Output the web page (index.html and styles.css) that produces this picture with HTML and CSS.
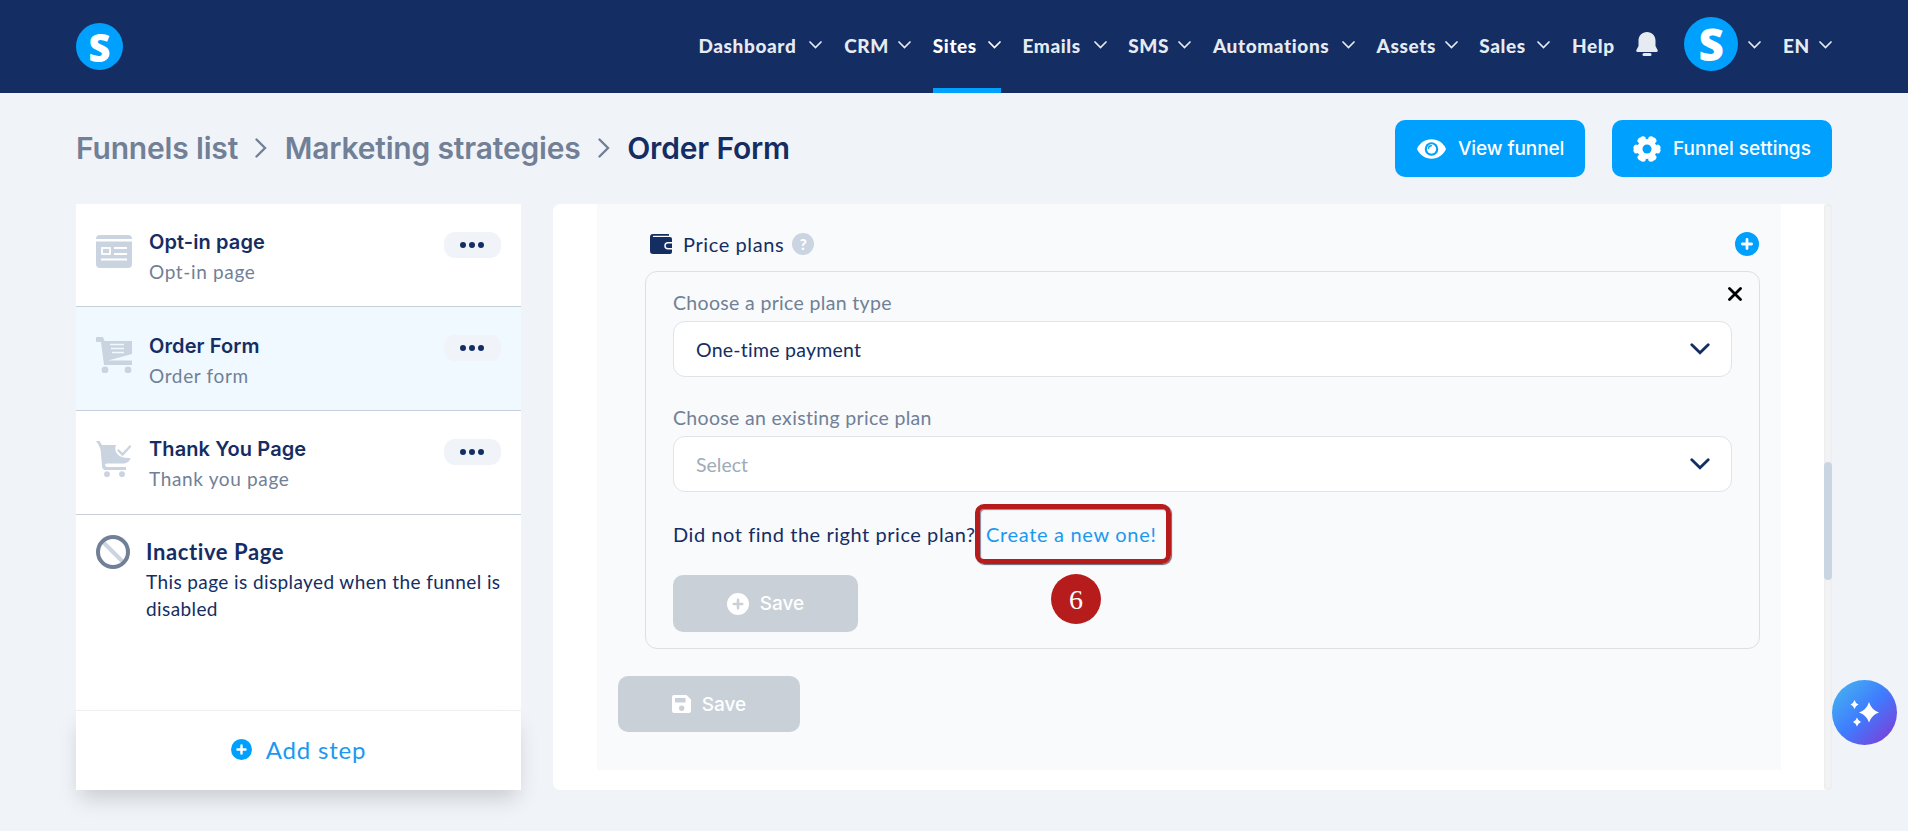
FILE: index.html
```
<!DOCTYPE html>
<html lang="en">
<head>
    <meta charset="UTF-8">
    <title>Order Form</title>
    <link rel="stylesheet" href="styles.css">
</head>
<body>
    <svg class="defs">
        <symbol id="chev" viewBox="0 0 13 8"><path d="M1 1l5.500 5.500L12 1" fill="none" stroke="currentColor" stroke-width="1.700" stroke-linecap="round"/></symbol>
        <symbol id="chev-bold" viewBox="0 0 20 12"><path d="M1.800 1.800l8.200 8 8.200-8" fill="none" stroke="currentColor" stroke-width="2.800" stroke-linecap="round"/></symbol>
        <symbol id="sep" viewBox="0 0 12 20"><path d="M1.500 1.500L10 10l-8.500 8.500" fill="none" stroke="currentColor" stroke-width="2.400" stroke-linecap="round"/></symbol>
        <symbol id="plus" viewBox="0 0 24 24"><path fill-rule="evenodd" fill="currentColor" d="M12 0a12 12 0 1 0 0 24 12 12 0 0 0 0-24zM10.600 7.400a1.400 1.400 0 0 1 2.800 0v3.200h3.200a1.400 1.400 0 0 1 0 2.800h-3.200v3.200a1.400 1.400 0 0 1-2.800 0v-3.200H7.400a1.400 1.400 0 0 1 0-2.800h3.200z"/></symbol>
    </svg>

    <header class="header">
        <div class="logo">S</div>
        <nav class="nav">
            <a class="nav-item">Dashboard <svg><use href="#chev"/></svg></a>
            <a class="nav-item">CRM <svg><use href="#chev"/></svg></a>
            <a class="nav-item active">Sites <svg><use href="#chev"/></svg></a>
            <a class="nav-item">Emails <svg><use href="#chev"/></svg></a>
            <a class="nav-item">SMS <svg><use href="#chev"/></svg></a>
            <a class="nav-item">Automations <svg><use href="#chev"/></svg></a>
            <a class="nav-item">Assets <svg><use href="#chev"/></svg></a>
            <a class="nav-item">Sales <svg><use href="#chev"/></svg></a>
            <a class="nav-item">Help</a>
            <a class="nav-item"><svg class="bell" viewBox="0 0 22 24"><path fill="currentColor" d="M11 0C6 0 2.500 3.800 2.500 8.500V14L.3 18.200C-.1 19.200.5 20 1.500 20h19c1 0 1.600-.8 1.200-1.800L19.500 14V8.500C19.500 3.800 16 0 11 0z"/><rect x="6.500" y="21" width="9" height="3" rx="1.500" fill="currentColor"/></svg></a>
            <a class="nav-item"><span class="logo avatar">S</span> <svg><use href="#chev"/></svg></a>
            <a class="nav-item">EN <svg><use href="#chev"/></svg></a>
        </nav>
    </header>

    <div class="topbar">
        <div class="crumbs">
            <span>Funnels list</span>
            <svg><use href="#sep"/></svg>
            <span>Marketing strategies</span>
            <svg><use href="#sep"/></svg>
            <span class="current">Order Form</span>
        </div>
        <div class="actions">
            <button class="btn view">
                <svg viewBox="0 0 30 20" width="29" height="20"><path fill="#fff" d="M15 0C8 0 3 4 .3 9.200a1.800 1.800 0 0 0 0 1.600C3 16 8 20 15 20s12-4 14.700-9.200a1.800 1.800 0 0 0 0-1.600C27 4 22 0 15 0z"/><circle cx="15" cy="10" r="7" fill="#00a0ff"/><circle cx="15" cy="10" r="4.800" fill="#fff"/><path d="M11.800 9.200a3.300 3.300 0 0 1 3-2.600" fill="none" stroke="#00a0ff" stroke-width="1.500" stroke-linecap="round"/></svg>
                View funnel
            </button>
            <button class="btn settings">
                <svg viewBox="0 0 28 26" width="28" height="26"><g fill="#fff"><circle cx="14" cy="13" r="10"/><g id="teeth"><circle cx="10" cy="3" r="2.800"/><circle cx="18" cy="3" r="2.800"/><circle cx="10" cy="23" r="2.800"/><circle cx="18" cy="23" r="2.800"/></g><use href="#teeth" transform="rotate(60 14 13)"/><use href="#teeth" transform="rotate(120 14 13)"/></g><circle cx="14" cy="13" r="4.500" fill="#00a0ff"/></svg>
                Funnel settings
            </button>
        </div>
    </div>

    <div class="content">
        <aside class="sidebar">
            <div class="step">
                <svg class="step-icon" viewBox="0 0 36 36"><path fill="#cad3e0" d="M4 1h28a4 4 0 0 1 4 4H0a4 4 0 0 1 4-4zM0 7.500h36V30a4 4 0 0 1-4 4H4a4 4 0 0 1-4-4z"/><g fill="none" stroke="#fff" stroke-width="1.800"><rect x="6" y="14" width="8" height="6"/><path d="M18 14h13M18 20h13M5 25.500h26"/></g></svg>
                <div class="step-text">
                    <h3>Opt-in page</h3>
                    <p>Opt-in page</p>
                </div>
                <div class="more"><i></i><i></i><i></i></div>
            </div>
            <div class="step selected">
                <svg class="step-icon" viewBox="0 0 36 36"><path fill="#cad3e0" d="M1.500 0H7l1.500 4H36v13L12 23.500h24V28H8L5 5H1.500a2.500 2.500 0 0 1 0-5z"/><circle cx="9" cy="33" r="3.400" fill="#cad3e0"/><circle cx="32" cy="33" r="3.400" fill="#cad3e0"/><path d="M14 7.500h14M15 11.500h13M16 15.500h12" stroke="#f0f9ff" stroke-width="1.300"/></svg>
                <div class="step-text">
                    <h3>Order Form</h3>
                    <p>Order form</p>
                </div>
                <div class="more"><i></i><i></i><i></i></div>
            </div>
            <div class="step">
                <svg class="step-icon" viewBox="0 0 36 36"><path fill="#cad3e0" d="M0 0h3.500L6 4h14c-3 7 3 14 14.500 13-1 4-4 5.500-8 5.500H11c-3 0-2 3.500 0 3.500h19v3H10c-3 0-4-2-4-5L4.500 8 2 3z"/><path d="M22.500 9.500l4 4 7.500-8" fill="none" stroke="#cad3e0" stroke-width="2.400" stroke-linecap="round"/><circle cx="11" cy="33.200" r="2.900" fill="#cad3e0"/><circle cx="26" cy="33.200" r="2.900" fill="#cad3e0"/></svg>
                <div class="step-text">
                    <h3>Thank You Page</h3>
                    <p>Thank you page</p>
                </div>
                <div class="more"><i></i><i></i><i></i></div>
            </div>
            <div class="inactive">
                <svg viewBox="0 0 34 34" width="34" height="34"><path d="M7 7l20 20" stroke="#cbd5e1" stroke-width="4"/><circle cx="17" cy="17" r="15" fill="none" stroke="#718096" stroke-width="4"/></svg>
                <div>
                    <h3>Inactive Page</h3>
                    <p>This page is displayed when the funnel is disabled</p>
                </div>
            </div>
            <div class="add-step"><svg><use href="#plus"/></svg> <span>Add step</span></div>
        </aside>

        <main class="panel">
            <div class="panel-body">
                <div class="plans-head">
                    <svg viewBox="0 0 22 20" width="22" height="20"><path fill="#142d63" d="M3 0h16v1.800H3.500a.6.600 0 0 0 0 1.300H20a2 2 0 0 1 2 2V8h-4a3.700 3.700 0 0 0 0 7.500h4V18a2 2 0 0 1-2 2H3a3 3 0 0 1-3-3V3a3 3 0 0 1 3-3z"/><path fill="#142d63" d="M18 9.500h4V14h-4a2.200 2.200 0 0 1 0-4.500z"/></svg>
                    <span class="plans-title">Price plans</span>
                    <span class="help">?</span>
                    <svg class="plans-add"><use href="#plus"/></svg>
                </div>
                <div class="card">
                    <svg class="close" viewBox="0 0 14 14"><path d="M1.500 1.500l11 11M12.500 1.500l-11 11" stroke="#000" stroke-width="2.800" stroke-linecap="round"/></svg>
                    <label>Choose a price plan type</label>
                    <div class="select"><span>One-time payment</span> <svg><use href="#chev-bold"/></svg></div>
                    <label>Choose an existing price plan</label>
                    <div class="select empty"><span>Select</span> <svg><use href="#chev-bold"/></svg></div>
                    <div class="hint">
                        <span class="question">Did not find the right price plan?</span>
                        <a class="create">Create a new one!<span class="mark"></span><span class="mark-number">6</span></a>
                    </div>
                    <button class="btn disabled"><svg width="22" height="22"><use href="#plus"/></svg> Save</button>
                </div>
                <button class="btn disabled save-form">
                    <svg viewBox="0 0 19 18" width="19" height="18"><path fill="#fff" fill-rule="evenodd" d="M2 0h12.500L19 4.500V16a2 2 0 0 1-2 2H2a2 2 0 0 1-2-2V2a2 2 0 0 1 2-2zM3 3v4.500h10.500V3zM9.700 10.500a2.700 2.700 0 1 0 0 5.400 2.700 2.700 0 0 0 0-5.400z"/></svg>
                    Save
                </button>
            </div>
            <div class="scrollbar"><div class="thumb"></div></div>
        </main>
    </div>

    <div class="assistant">
        <svg viewBox="0 0 30 28" width="30" height="28"><path fill="#fff" d="M19 3q2.500 8 10 10.500-7.500 2.500-10 10-2.500-7.500-10-10Q16.500 11 19 3zM4.500 1q1 3.500 4 4.500-3 1-4 4.500-1-3.500-4-4.500 3-1 4-4.500zM7 18.500q1 3.500 4 4.500-3 1-4 4.500-1-3.500-4-4.500 3-1 4-4.500z"/></svg>
    </div>
</body>
</html>
```

FILE: styles.css
```
* {
    box-sizing: border-box;
}
body {
    margin: 0;
    height: 831px;
    overflow: hidden;
    font-family: Lato, sans-serif;
    background-color: #f0f4f9;
    color: #142d63;
}
h3, p {
    margin: 0;
}
svg {
    flex: none;
}
.defs {
    display: none;
}

/* header */
.header {
    display: flex;
    justify-content: space-between;
    align-items: center;
    height: 93px;
    padding: 0 76px;
    background-color: #142d63;
}
.logo {
    display: flex;
    align-items: center;
    justify-content: center;
    width: 47px;
    height: 47px;
    border-radius: 50%;
    background-color: #00a0ff;
    color: #fff;
    font: 800 38px/1 "Open Sans", sans-serif;
    letter-spacing: 0;
}
.avatar {
    width: 54px;
    height: 54px;
    font-size: 44px;
    margin-top: -3px;
}
.nav {
    display: grid;
    grid-template-columns: 124px 67px 68px 84px 63px 142px 81px 71px 42px 27px 77px 49px;
    column-gap: 21.700px;
    height: 93px;
}
.nav-item {
    display: flex;
    align-items: center;
    justify-content: space-between;
    color: #e6ebf2;
    font-size: 19px;
    font-weight: 900;
    letter-spacing: 0.6px;
    white-space: nowrap;
    border-top: 3px solid transparent;
    border-bottom: 5px solid transparent;
}
.nav-item svg {
    width: 13px;
    height: 8px;
    margin-top: -2px;
}
.nav-item .bell {
    width: 22px;
    height: 24px;
    margin-top: -3px;
}
.nav-item.active {
    color: #fff;
    border-bottom-color: #00a0ff;
}

/* breadcrumb and buttons */
.topbar {
    display: flex;
    justify-content: space-between;
    align-items: center;
    height: 111px;
    padding: 0 76px;
}
.crumbs {
    display: flex;
    align-items: center;
    gap: 17.300px;
    margin-top: -2px;
    font: 600 30px Inter, sans-serif;
    letter-spacing: -0.170px;
    color: #718096;
}
.crumbs svg {
    width: 12px;
    height: 20px;
}
.crumbs .current {
    color: #142d63;
}
.actions {
    display: flex;
    gap: 27px;
}
.btn {
    display: flex;
    align-items: center;
    gap: 12px;
    height: 57px;
    padding: 0 21px;
    border: none;
    border-radius: 10px;
    background-color: #00a0ff;
    color: #fff;
    font: 500 19px Inter, sans-serif;
    white-space: nowrap;
}
.view {
    width: 190px;
    padding-left: 22px;
    letter-spacing: -0.1px;
}
.settings {
    width: 220px;
}

/* steps */
.content {
    display: flex;
    gap: 32px;
    height: 586px;
    padding: 0 76px;
}
.sidebar {
    display: flex;
    flex-direction: column;
    width: 445px;
    background-color: #fff;
}
.step {
    display: flex;
    height: 104px;
    padding: 28px 20px 0;
    border-bottom: 1px solid #c6d0db;
}
.step:first-child {
    height: 103px;
}
.step.selected {
    background-color: #f0f9ff;
}
.step-icon {
    width: 36px;
    height: 36px;
    margin-top: 2px;
}
.step-text {
    flex: 1;
    margin-left: 17px;
}
.step-text h3 {
    font: 600 20px/20px Inter, sans-serif;
    letter-spacing: 0.1px;
}
.selected h3 {
    padding-top: 1px;
}
.step-text p {
    margin-top: 9px;
    font-size: 19px;
    line-height: 22px;
    letter-spacing: 0.650px;
    color: #718096;
}
.more {
    display: flex;
    align-items: center;
    justify-content: center;
    gap: 3px;
    width: 57px;
    height: 26px;
    padding-right: 1px;
    border-radius: 11px;
    background-color: #f0f4f9;
}
.more i {
    width: 6px;
    height: 6px;
    border-radius: 50%;
    background-color: #142d63;
}
.inactive {
    display: flex;
    flex: 1;
    gap: 16px;
    padding: 20px 20px 0;
}
.inactive h3 {
    margin-top: 4px;
    font-size: 22px;
    line-height: 25px;
    letter-spacing: 0.600px;
}
.inactive p {
    margin-top: 4px;
    font-size: 19px;
    line-height: 27px;
    letter-spacing: 0.400px;
}
.add-step {
    display: flex;
    align-items: center;
    justify-content: center;
    gap: 14px;
    height: 80px;
    border-top: 1px solid #edeff2;
    background-color: #fff;
    color: #1b98f0;
    font-size: 24px;
    letter-spacing: 0.8px;
    box-shadow: 0 12px 20px -4px rgba(0, 0, 0, 0.17);
}
.add-step svg {
    width: 21px;
    height: 21px;
    margin-top: -2px;
    color: #00a0ff;
}
.add-step span {
    margin-top: -2px;
}

/* price plans */
.panel {
    display: flex;
    justify-content: space-between;
    flex: 1;
    padding-left: 44px;
    border-radius: 7px;
    background-color: #fff;
}
.panel-body {
    width: 1184px;
    height: 566px;
    padding: 27px 21px 0 48px;
    background-color: #f8fafc;
}
.plans-head {
    display: flex;
    align-items: center;
    height: 26px;
    margin-bottom: 14px;
    padding: 0 1px 0 5px;
}
.plans-title {
    margin: 0 8px 0 11px;
    font-size: 20px;
    letter-spacing: 0.600px;
}
.help {
    width: 22px;
    height: 22px;
    border-radius: 50%;
    background-color: #cbd5e1;
    color: #fff;
    font: 900 15px/22px Lato, sans-serif;
    text-align: center;
}
.plans-add {
    width: 24px;
    height: 24px;
    margin-left: auto;
    color: #00a0ff;
}
.card {
    position: relative;
    height: 378px;
    padding: 17px 27px 0;
    border: 1px solid #dcdfe4;
    border-radius: 12px;
}
.close {
    position: absolute;
    top: 15px;
    right: 17px;
    width: 14px;
    height: 14px;
}
.card label {
    display: block;
    height: 32px;
    font-size: 19.500px;
    line-height: 27px;
    letter-spacing: 0.330px;
    color: #718096;
}
.select {
    display: flex;
    align-items: center;
    justify-content: space-between;
    height: 56px;
    margin-bottom: 27px;
    padding: 0 21px 0 22px;
    border: 1px solid #e0e3e8;
    border-radius: 12px;
    background-color: #fff;
    font-size: 19.500px;
    letter-spacing: 0.250px;
}
.select svg {
    width: 20px;
    height: 12px;
}
.select.empty {
    margin-bottom: 30px;
}
.empty span {
    color: #a0abb8;
    letter-spacing: 0;
}
.hint {
    display: flex;
    height: 24px;
    margin-bottom: 29px;
    font-size: 20px;
    line-height: 24px;
    letter-spacing: 0.550px;
    white-space: nowrap;
}
.question {
    width: 313px;
}
.create {
    position: relative;
    color: #1b98f0;
    letter-spacing: 0.680px;
}
/* outlined link with its step number */
.mark {
    position: absolute;
    top: -18px;
    left: -11px;
    width: 196px;
    height: 60px;
    border: 5px solid #b71c1c;
    border-radius: 9px;
    box-shadow: 1px 1px 1px #667, inset 1px 1px 1px #889;
}
.mark-number {
    position: absolute;
    top: 52px;
    left: 65px;
    width: 50px;
    height: 50px;
    border-radius: 50%;
    background-color: #b71c1c;
    color: #fff;
    font: 28px/51px "Liberation Serif", serif;
    letter-spacing: 0;
    text-align: center;
}
.btn.disabled {
    justify-content: center;
    gap: 11px;
    width: 185px;
    background-color: #c9d0d7;
}
.btn.save-form {
    width: 182px;
    height: 56px;
    margin: 27px 0 0 -27px;
}
.scrollbar {
    width: 8px;
    padding-top: 258px;
    border-radius: 5px;
    background-color: #f3f3f4;
    box-shadow: inset 0 0 3px #e4e5e8;
}
.thumb {
    height: 118px;
    border-radius: 4px;
    background-color: #cad5e2;
}

.assistant {
    position: absolute;
    top: 680px;
    left: 1832px;
    display: flex;
    align-items: center;
    justify-content: center;
    width: 65px;
    height: 65px;
    border-radius: 50%;
    background: linear-gradient(135deg, #44aef0 10%, #3f7cff 50%, #7b3fd8 92%);
}
```
